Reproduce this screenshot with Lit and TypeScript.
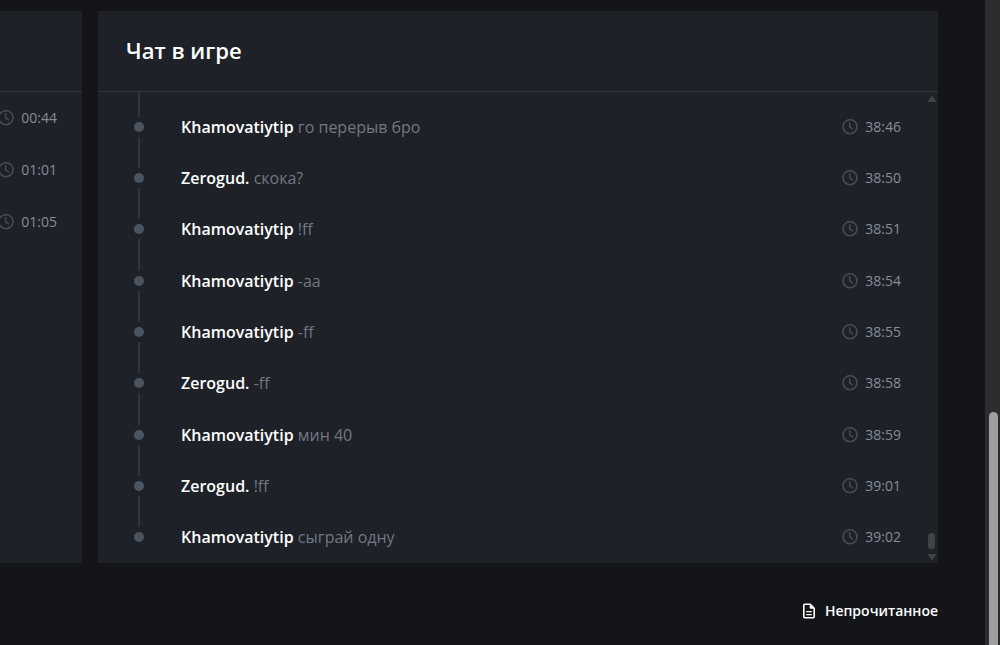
import { LitElement, html, css } from "lit";
import { customElement } from "lit/decorators.js";

interface Message {
  author: string;
  text: string;
  time: string;
}

const messages: Message[] = [
  { author: "Khamovatiytip", text: "го перерыв бро", time: "38:46" },
  { author: "Zerogud.", text: "скока?", time: "38:50" },
  { author: "Khamovatiytip", text: "!ff", time: "38:51" },
  { author: "Khamovatiytip", text: "-aa", time: "38:54" },
  { author: "Khamovatiytip", text: "-ff", time: "38:55" },
  { author: "Zerogud.", text: "-ff", time: "38:58" },
  { author: "Khamovatiytip", text: "мин 40", time: "38:59" },
  { author: "Zerogud.", text: "!ff", time: "39:01" },
  { author: "Khamovatiytip", text: "сыграй одну", time: "39:02" },
];

const events = ["00:44", "01:01", "01:05"];

@customElement("time-stamp")
class TimeStamp extends LitElement {
  static properties = { value: { type: String } };
  declare value: string;

  static styles = css`
    :host {
      display: flex;
      align-items: center;
      flex: none;
      gap: 7px;
      color: #858d99;
      font-size: 14px;
      line-height: 20px;
    }
    .clock {
      display: block;
      flex: none;
      color: #464a53;
    }
  `;

  render() {
    return html`
      <svg class="clock" width="16" height="16" viewBox="0 0 16 16" fill="none"
        stroke="currentColor" stroke-width="1.6" stroke-linecap="round" stroke-linejoin="round" aria-hidden="true">
        <circle cx="8" cy="7.7" r="7"></circle>
        <path d="M7.7 3.8V7.8l2.9 2"></path>
      </svg>
      <time>${this.value}</time>
    `;
  }
}

@customElement("app-root")
class AppRoot extends LitElement {
  static styles = css`
    :host {
      display: grid;
      grid-template-columns: minmax(0, 1fr) 15px;
      min-height: 100vh;
      background: #141519;
      color: #fff;
      font-family: "Open Sans", "Noto Sans", sans-serif;
    }
    .page {
      display: flex;
      flex-direction: column;
      padding: 11px 47px 0 0;
    }
    .panels {
      flex: 1;
      display: grid;
      grid-template-columns: 82px minmax(0, 1fr);
      gap: 16px;
    }
    .panel {
      display: flex;
      flex-direction: column;
      background: #1e2128;
      overflow: hidden;
    }
    .head {
      height: 78px;
      display: flex;
      align-items: center;
      padding: 0 28px 2px;
      border-bottom: 1px solid #30343c;
    }
    h2 {
      margin: 0;
      font-size: 22px;
      line-height: 32px;
      font-weight: 600;
    }
    ul {
      list-style: none;
      margin: 0;
      padding: 0;
    }
    .events {
      display: grid;
      grid-auto-rows: 52px;
      align-content: start;
      justify-content: end;
      padding-right: 25px;
    }
    .body {
      flex: 1;
      display: grid;
      grid-template-columns: minmax(0, 1fr) 13px;
    }
    .chat {
      display: grid;
      grid-template-rows: 9px repeat(9, minmax(44px, 1fr));
      padding: 0 24px 0 36px;
    }
    .row {
      display: flex;
      align-items: center;
    }
    .rail {
      align-self: stretch;
      flex: none;
      width: 10px;
      margin-right: 37px;
      display: flex;
      flex-direction: column;
      align-items: center;
      gap: 5px;
    }
    .line {
      flex: 1;
      width: 2px;
      background: #30343c;
    }
    .row:last-child .line:last-child {
      background: none;
    }
    .dot {
      width: 10px;
      height: 10px;
      border-radius: 50%;
      background: #4b5562;
    }
    .text {
      flex: 1;
      margin: 0;
      font-size: 16px;
      line-height: 24px;
      color: #717883;
    }
    .author {
      font-weight: 600;
      color: #fff;
    }
    .bar {
      display: flex;
      flex-direction: column;
      align-items: center;
      padding: 4px 0 3px;
    }
    .arrow {
      width: 8px;
      height: 6px;
      fill: #40434a;
    }
    .grip {
      width: 7px;
      height: 16px;
      margin: auto 0 5px;
      border-radius: 4px;
      background: #40434a;
    }
    .foot {
      display: flex;
      justify-content: flex-end;
      padding: 36px 0 22px;
    }
    .unread {
      display: flex;
      align-items: center;
      gap: 9px;
      color: #fff;
      font-size: 14px;
      line-height: 24px;
      font-weight: 600;
      text-decoration: none;
    }
    .track {
      display: grid;
      grid-template-rows: 412fr 233fr;
      background: #2c2c2c;
      padding: 0 2px 0 4px;
    }
    .thumb {
      grid-row: 2;
      border-radius: 5px 5px 0 0;
      background: #9f9f9f;
    }
  `;

  render() {
    return html`
      <main class="page">
        <div class="panels">
          <section class="panel">
            <div class="head"></div>
            <ul class="events">
              ${events.map((t) => html`<li class="row"><time-stamp .value=${t}></time-stamp></li>`)}
            </ul>
          </section>
          <section class="panel">
            <header class="head"><h2>Чат в игре</h2></header>
            <div class="body">
              <ul class="chat">
                <li class="row" aria-hidden="true"><span class="rail"><span class="line"></span></span></li>
                ${messages.map(
                  (m) => html`
                    <li class="row">
                      <span class="rail"><span class="line"></span><span class="dot"></span><span class="line"></span></span>
                      <p class="text"><span class="author">${m.author}</span> ${m.text}</p>
                      <time-stamp .value=${m.time}></time-stamp>
                    </li>
                  `
                )}
              </ul>
              <div class="bar" aria-hidden="true">
                <svg class="arrow" viewBox="0 0 8 6"><path d="M3.2.6a1 1 0 0 1 1.6 0L8 5.2V6H0v-.8z"></path></svg>
                <span class="grip"></span>
                <svg class="arrow" viewBox="0 0 8 6"><path d="M3.2 5.4a1 1 0 0 0 1.6 0L8 .8V0H0v.8z"></path></svg>
              </div>
            </div>
          </section>
        </div>
        <footer class="foot">
          <a class="unread" href="#unread">
            <svg width="14" height="16" viewBox="0 0 14 16" fill="none" stroke="currentColor" stroke-width="1.6" stroke-linejoin="round" aria-hidden="true">
              <path d="M2.8 1.2h5.4l4 4v8.6a1 1 0 0 1-1 1H2.8a1 1 0 0 1-1-1V2.2a1 1 0 0 1 1-1z"></path>
              <path d="M8.2 1.2v4h4z" fill="currentColor" stroke-width="1"></path>
              <path d="M4.2 8.6h5.6M4.2 11.6h5.6" stroke-width="1.3"></path>
            </svg>
            Непрочитанное
          </a>
        </footer>
      </main>
      <div class="track" aria-hidden="true"><div class="thumb"></div></div>
    `;
  }
}
